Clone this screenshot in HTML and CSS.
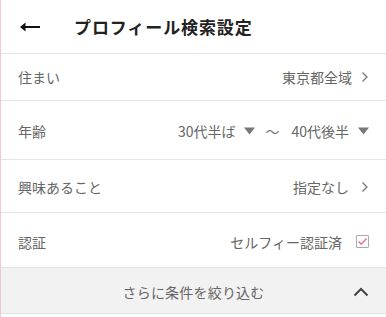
FILE: index.html
```html
<!DOCTYPE html>
<html lang="ja">
<head>
<meta charset="utf-8">
<link rel="stylesheet" href="styles.css">
</head>
<body>
<div class="app">
  <header class="header">
    <svg class="back" width="22" height="12" viewBox="0 0 22 12">
      <path d="M2 6 H21" stroke="#111" stroke-width="2" fill="none"/>
      <path d="M1 6 L6.5 1.5 L6.5 10.5 Z" fill="#111"/>
    </svg>
    <h1 class="title">プロフィール検索設定</h1>
  </header>
  <div class="row row-1">
    <span class="label">住まい</span>
    <span class="value">東京都全域<svg class="chev" width="8" height="12" viewBox="0 0 8 12"><path d="M1.5 1.5 L6 6 L1.5 10.5" stroke="#777" stroke-width="1.3" fill="none"/></svg></span>
  </div>
  <div class="row row-2">
    <span class="label">年齢</span>
    <span class="value">30代半ば<svg class="tri" width="11" height="8" viewBox="0 0 11 8"><path d="M0 0.5 H11 L5.5 7.5 Z" fill="#777"/></svg><span class="tilde">〜</span>40代後半<svg class="tri" width="11" height="8" viewBox="0 0 11 8"><path d="M0 0.5 H11 L5.5 7.5 Z" fill="#777"/></svg></span>
  </div>
  <div class="row row-3">
    <span class="label">興味あること</span>
    <span class="value">指定なし<svg class="chev chev-wide" width="8" height="12" viewBox="0 0 8 12"><path d="M1.5 1.5 L6 6 L1.5 10.5" stroke="#777" stroke-width="1.3" fill="none"/></svg></span>
  </div>
  <div class="row row-4">
    <span class="label">認証</span>
    <span class="value">セルフィー認証済<span class="check"><svg width="11" height="9" viewBox="0 0 11 9"><path d="M1.5 4.5 L4.2 7.2 L9.5 1.5" stroke="#e3779d" stroke-width="1.6" fill="none"/></svg></span></span>
  </div>
  <div class="more">
    <span></span>
    <span class="more-text">さらに条件を絞り込む</span>
    <svg class="caret" width="16" height="10" viewBox="0 0 16 10"><path d="M1.5 8.5 L8 2 L14.5 8.5" stroke="#444" stroke-width="2" fill="none"/></svg>
  </div>
</div>
</body>
</html>
```
FILE: styles.css
```css
html, body {
  margin: 0;
  padding: 0;
  background: #fff;
}
body {
  font-family: "Noto Sans CJK JP", "Noto Sans", sans-serif;
}
.app {
  width: 385px;
  height: 317px;
  border-left: 1px solid #f3c7d6;
  overflow: hidden;
}
.header {
  height: 53px;
  border-bottom: 1px solid #e4e4e4;
  display: flex;
  align-items: center;
  padding-left: 18px;
}
.back {
  display: block;
  margin-top: 1px;
}
.title {
  margin: 0 0 0 33px;
  font-size: 17px;
  letter-spacing: 0.9px;
  font-weight: 700;
  color: #222;
}
.row {
  display: flex;
  justify-content: space-between;
  align-items: center;
  padding: 0 17px 0 17px;
  border-bottom: 1px solid #e4e4e4;
  font-size: 14px;
  color: #666;
}
.row-1 { height: 46px; }
.row-2 { height: 58px; padding-top: 2px; box-sizing: border-box; height: 59px; }
.row-3 { height: 52px; padding-top: 2px; box-sizing: border-box; height: 53px; }
.row-4 { height: 54px; padding-top: 3px; box-sizing: border-box; height: 55px; }
.label {
  color: #666;
}
.value {
  display: flex;
  align-items: center;
  color: #666;
}
.chev {
  margin-left: 9px;
}
.chev-wide {
  margin-left: 12px;
}
.tri {
  margin-left: 9px;
}
.tilde {
  margin: 0 12px 0 10px;
  color: #777;
}
.check {
  width: 11px;
  height: 11px;
  border: 1px solid #aaa;
  border-radius: 1px;
  margin-left: 14px;
  display: flex;
  align-items: center;
  justify-content: center;
}
.more {
  height: 45px;
  background: #f3f2f2;
  border-bottom: 1px solid #e2e2e2;
  display: grid;
  grid-template-columns: 1fr auto 1fr;
  align-items: center;
  font-size: 14px;
  color: #666;
  letter-spacing: 0.2px;
}
.more-text {
  padding-top: 2px;
}
.caret {
  justify-self: end;
  margin-right: 17px;
  margin-top: 2px;
}
```
